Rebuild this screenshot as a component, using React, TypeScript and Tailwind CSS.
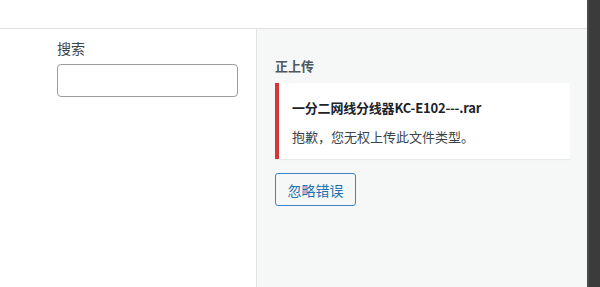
export default function App() {
  return (
    <div className="flex h-[287px] w-[600px] overflow-hidden bg-white font-['Noto_Sans_CJK_SC','Noto_Sans',sans-serif]">
      <div className="flex flex-1 flex-col">
        <header className="h-[29px] shrink-0 border-b border-[#e0e0e0] bg-white" />
        <div className="flex flex-1">
          <SearchColumn />
          <UploadPanel />
        </div>
      </div>
      <div className="w-[13px] shrink-0 border-l-2 border-[#4a4a4a] bg-[#3b3b3b]" />
    </div>
  );
}

function SearchColumn() {
  return (
    <aside className="w-[256px] shrink-0 bg-white pl-[57px] pt-[9px]">
      <label className="block text-[14px] leading-[20px] text-[#3c434a]">搜索</label>
      <input
        type="text"
        className="mt-[6px] block h-[33px] w-[181px] rounded-[4px] border border-[#9a9ca0] bg-white px-2 text-[14px] outline-none"
      />
    </aside>
  );
}

function UploadPanel() {
  return (
    <section className="flex-1 border-l border-[#e2e4e7] bg-[#f6f7f7] pl-[18px] pr-[17px] pt-[27px]">
      <h2 className="text-[13px] font-bold leading-[20px] text-[#50575e]">正上传</h2>
      <div className="mt-[7px] border-l-4 border-[#d63638] bg-white pb-[12px] pl-[13px] pr-3 pt-[15px] shadow-[0_1px_1px_rgba(0,0,0,0.06)]">
        <p className="text-[13px] font-bold leading-[20px] tracking-[-0.2px] text-[#1d2327]">一分二网线分线器KC-E102---.rar</p>
        <p className="mt-[9px] text-[13px] leading-[20px] text-[#3c434a]">抱歉，您无权上传此文件类型。</p>
      </div>
      <button
        type="button"
        className="mt-[14px] h-[33px] w-[81px] rounded-[3px] border border-[#3f84c6] bg-[#f6f7f7] text-[14px] leading-[20px] text-[#2271b1]"
      >
        忽略错误
      </button>
    </section>
  );
}
